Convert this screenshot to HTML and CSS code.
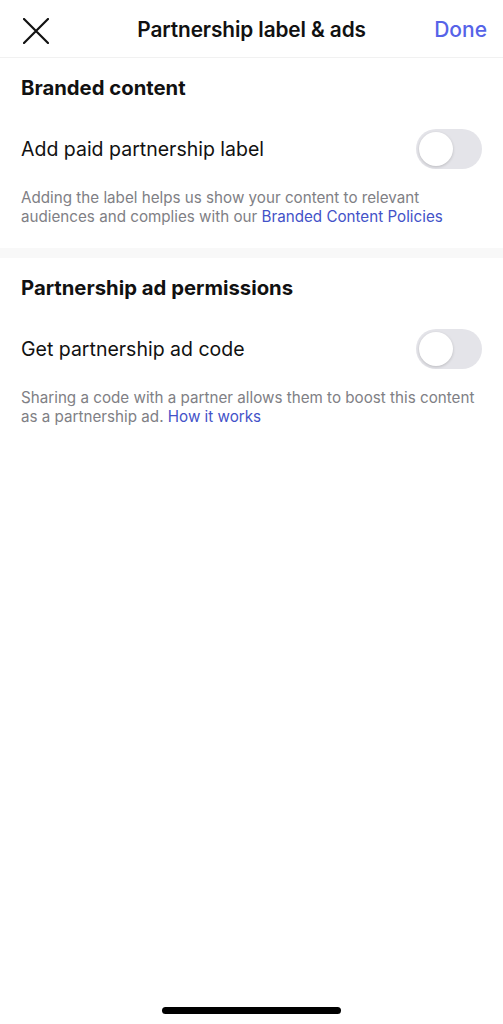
FILE: index.html
```html
<!DOCTYPE html>
<html lang="en">

<head>
    <meta charset="UTF-8">
    <meta name="viewport" content="width=device-width, initial-scale=1.0">
    <title>Partnership label &amp; ads</title>
    <link rel="stylesheet" href="styles.css">
</head>

<body>
    <div class="screen">
        <header class="topbar">
            <button class="close" aria-label="Close">
                <svg width="26" height="26" viewBox="0 0 26 26">
                    <path d="M1 1 L25 25 M25 1 L1 25" stroke="#111" stroke-width="2.2" stroke-linecap="round" fill="none" />
                </svg>
            </button>
            <h1>Partnership label &amp; ads</h1>
            <a class="done" href="#">Done</a>
        </header>

        <section class="group">
            <h2>Branded content</h2>
            <div class="row">
                <span>Add paid partnership label</span>
                <span class="toggle"><span class="knob"></span></span>
            </div>
            <p class="note">Adding the label helps us show your content to relevant audiences and complies with our <a href="#">Branded Content Policies</a></p>
        </section>

        <div class="band"></div>

        <section class="group">
            <h2>Partnership ad permissions</h2>
            <div class="row">
                <span>Get partnership ad code</span>
                <span class="toggle"><span class="knob"></span></span>
            </div>
            <p class="note">Sharing a code with a partner allows them to boost this content as a partnership ad. <a href="#">How it works</a></p>
        </section>

        <div class="home-bar"></div>
    </div>
</body>

</html>
```

FILE: styles.css
```css
body {
    margin: 0;
    background-color: #fff;
    font-family: Inter, "Noto Sans", sans-serif;
    color: #111;
}

.screen {
    position: relative;
    height: 1024px;
    overflow: hidden;
}

.topbar {
    display: flex;
    align-items: center;
    justify-content: space-between;
    height: 58px;
    padding: 0 16px 0 23px;
    border-bottom: 1px solid #f1f1f1;
    box-sizing: border-box;
}

.close {
    background: none;
    border: none;
    padding: 0;
    width: 26px;
    height: 26px;
    margin-top: 4px;
    display: flex;
}

.topbar h1 {
    font-size: 20.8px;
    font-weight: 600;
    margin: 0 0 0 20px;
    letter-spacing: -0.1px;
    padding-top: 2px;
}

.done {
    color: #5663e8;
    font-size: 21px;
    font-weight: 500;
    text-decoration: none;
    padding-top: 2px;
}

.group {
    padding: 0 21px;
}

.group h2 {
    font-size: 20.3px;
    font-weight: 700;
    margin: 0;
    padding-top: 17px;
    line-height: 26px;
}

.row {
    display: flex;
    align-items: center;
    justify-content: space-between;
    margin-top: 27px;
    font-size: 19.5px;
    height: 41px;
}

.toggle {
    width: 66px;
    height: 40px;
    border-radius: 20px;
    background-color: #e4e4e9;
    display: flex;
    align-items: center;
    padding: 0 3px;
    box-sizing: border-box;
}

.knob {
    width: 34px;
    height: 34px;
    border-radius: 50%;
    background-color: #fff;
    box-shadow: 0 1px 3px rgba(0, 0, 0, 0.18);
}

.note {
    font-size: 15.2px;
    line-height: 18.6px;
    color: #808085;
    margin: 20px 0 0;
    padding-bottom: 22px;
}

.note a {
    color: #4352c8;
    text-decoration: none;
}

.band {
    height: 10px;
    background-color: #f8f8f8;
}

.home-bar {
    position: absolute;
    left: 162px;
    bottom: 10px;
    width: 179px;
    height: 7px;
    border-radius: 4px;
    background-color: #000;
}
```
